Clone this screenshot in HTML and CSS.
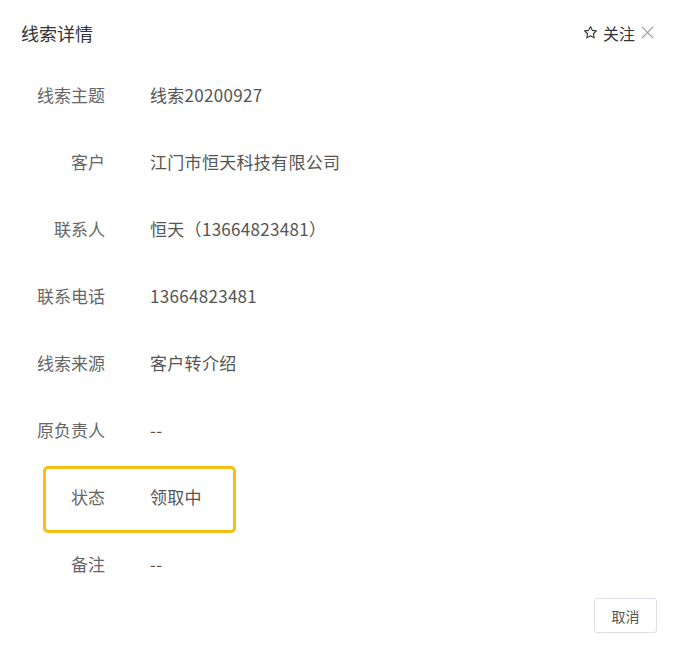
FILE: index.html
```html
<!DOCTYPE html>
<html lang="zh-CN">
<head>
<meta charset="utf-8">
<link rel="stylesheet" href="styles.css">
</head>
<body>
<div class="dialog">
  <div class="header">
    <div class="title">线索详情</div>
    <div class="actions">
      <svg class="star" viewBox="0 0 24 24" width="15" height="15"><path d="M12 2.5l2.9 6.1 6.6.8-4.9 4.6 1.3 6.6L12 17.3l-5.9 3.3 1.3-6.6-4.9-4.6 6.6-.8z" fill="none" stroke="#333" stroke-width="1.8" stroke-linejoin="round"/></svg>
      <span class="follow">关注</span>
      <svg class="close" viewBox="0 0 14 14" width="13" height="13"><path d="M1 1L13 13M13 1L1 13" stroke="#999" stroke-width="1.3"/></svg>
    </div>
  </div>
  <div class="rows">
    <div class="row"><div class="label">线索主题</div><div class="value">线索20200927</div></div>
    <div class="row"><div class="label">客户</div><div class="value">江门市恒天科技有限公司</div></div>
    <div class="row"><div class="label">联系人</div><div class="value">恒天（13664823481）</div></div>
    <div class="row"><div class="label">联系电话</div><div class="value">13664823481</div></div>
    <div class="row"><div class="label">线索来源</div><div class="value">客户转介绍</div></div>
    <div class="row"><div class="label">原负责人</div><div class="value">--</div></div>
    <div class="row row-highlight"><div class="label">状态</div><div class="value">领取中</div></div>
    <div class="row"><div class="label">备注</div><div class="value">--</div></div>
  </div>
  <div class="footer">
    <button class="btn">取消</button>
  </div>
</div>
</body>
</html>
```
FILE: styles.css
```css
* { box-sizing: border-box; }
body {
  margin: 0;
  background: #fff;
  font-family: "Noto Sans CJK SC", "Noto Sans", sans-serif;
}
.dialog {
  width: 673px;
  height: 665px;
  background: #fff;
}
.header {
  height: 61px;
  display: flex;
  align-items: center;
  justify-content: space-between;
  padding: 4px 19px 0 21px;
}
.title {
  font-size: 18px;
  color: #333;
}
.actions {
  display: flex;
  align-items: center;
}
.star { margin-right: 5px; }
.follow {
  font-size: 16px;
  color: #333;
  margin-right: 6px;
}
.rows {
  display: flex;
  flex-direction: column;
}
.row {
  position: relative;
  height: 67px;
  display: flex;
  align-items: center;
  padding-left: 21px;
  font-size: 17px;
}
.label {
  width: 84px;
  text-align: right;
  color: #666;
}
.value {
  margin-left: 45px;
  color: #555;
  letter-spacing: 0.3px;
}
.row-highlight::after {
  content: "";
  position: absolute;
  left: 43px;
  top: 3px;
  width: 187px;
  height: 61px;
  border: 3px solid #fbbd14;
  border-radius: 5px;
}
.footer {
  display: flex;
  justify-content: flex-end;
  padding-right: 16px;
  margin-top: 1px;
}
.btn {
  width: 63px;
  height: 35px;
  border: 1px solid #dcdfe6;
  border-radius: 3px;
  background: #fff;
  font-family: "Noto Sans CJK SC", sans-serif;
  font-size: 14px;
  color: #555;
  padding: 0;
}
```
